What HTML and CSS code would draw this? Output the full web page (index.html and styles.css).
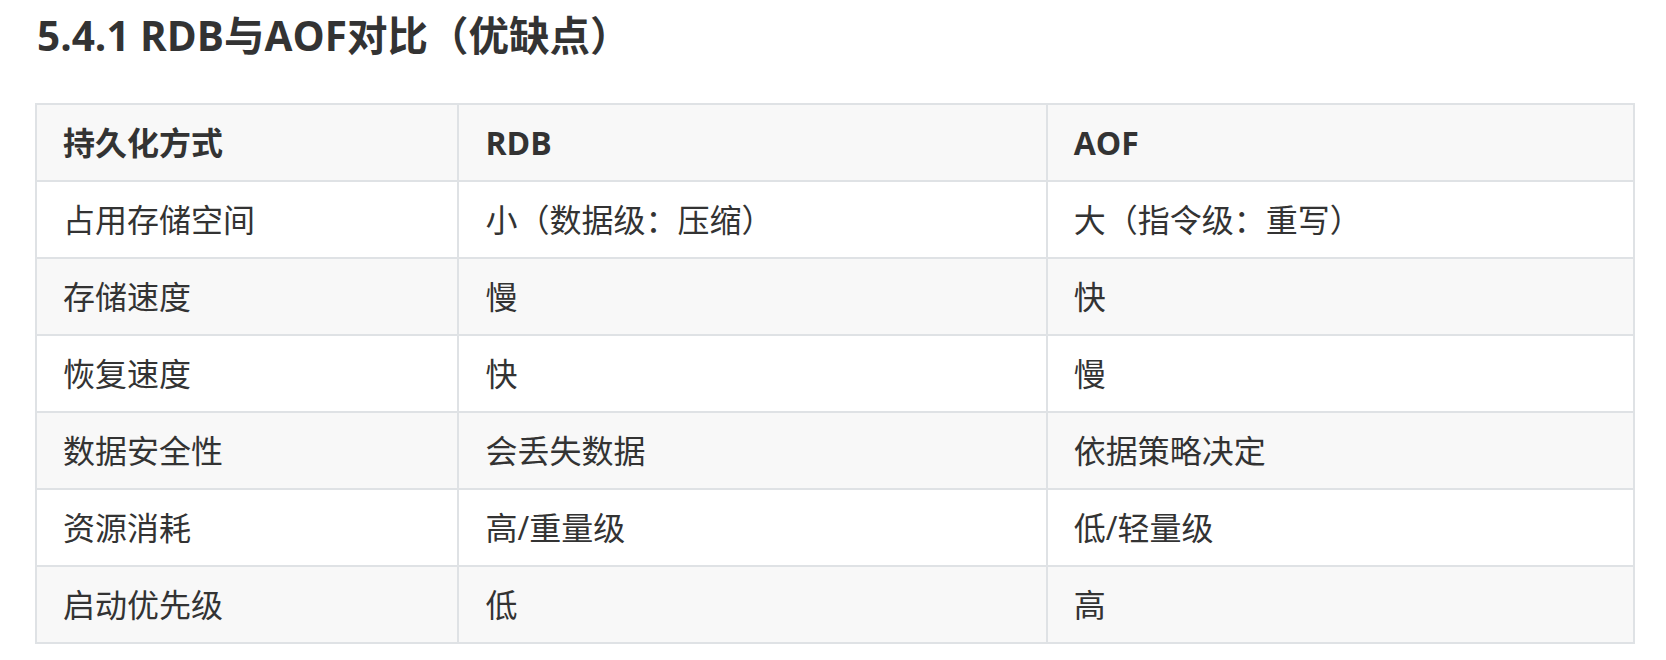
FILE: index.html
```html
<!DOCTYPE html>
<html lang="zh-CN">
<head>
<meta charset="utf-8">
<title>5.4.1 RDB与AOF对比（优缺点）</title>
<link rel="stylesheet" href="styles.css">
</head>
<body>
<div class="page">
  <h3 class="title">5.4.1 RDB与AOF对比（优缺点）</h3>
  <table class="cmp">
    <colgroup>
      <col class="c1"><col class="c2"><col class="c3">
    </colgroup>
    <thead>
      <tr><th>持久化方式</th><th>RDB</th><th>AOF</th></tr>
    </thead>
    <tbody>
      <tr><td>占用存储空间</td><td>小（数据级：压缩）</td><td>大（指令级：重写）</td></tr>
      <tr><td>存储速度</td><td>慢</td><td>快</td></tr>
      <tr><td>恢复速度</td><td>快</td><td>慢</td></tr>
      <tr><td>数据安全性</td><td>会丢失数据</td><td>依据策略决定</td></tr>
      <tr><td>资源消耗</td><td>高/重量级</td><td>低/轻量级</td></tr>
      <tr><td>启动优先级</td><td>低</td><td>高</td></tr>
    </tbody>
  </table>
</div>
</body>
</html>
```
FILE: styles.css
```css
html, body {
  margin: 0;
  padding: 0;
  background: #ffffff;
}
body {
  font-family: "Open Sans", "Noto Sans CJK SC", sans-serif;
  color: #333333;
  font-size: 32px;
  line-height: 1.6;
}
.page {
  padding: 8px 31px 0 35px;
}
.title {
  font-size: 40.5px;
  line-height: 56px;
  font-weight: 700;
  margin: 0 0 39px 2px;
}
.cmp {
  border-collapse: collapse;
  width: 1600px;
}
.c1 { width: 423px; }
.c2 { width: 589px; }
.c3 { width: 588px; }
.cmp th, .cmp td {
  border: 2px solid #dfe2e5;
  padding: 12px 26px;
  text-align: left;
  font-size: 32px;
  line-height: 51px;
}
.cmp th {
  font-weight: 700;
}
.cmp thead tr {
  background: #f8f8f8;
}
.cmp tbody tr:nth-child(2n) {
  background: #f8f8f8;
}
```
